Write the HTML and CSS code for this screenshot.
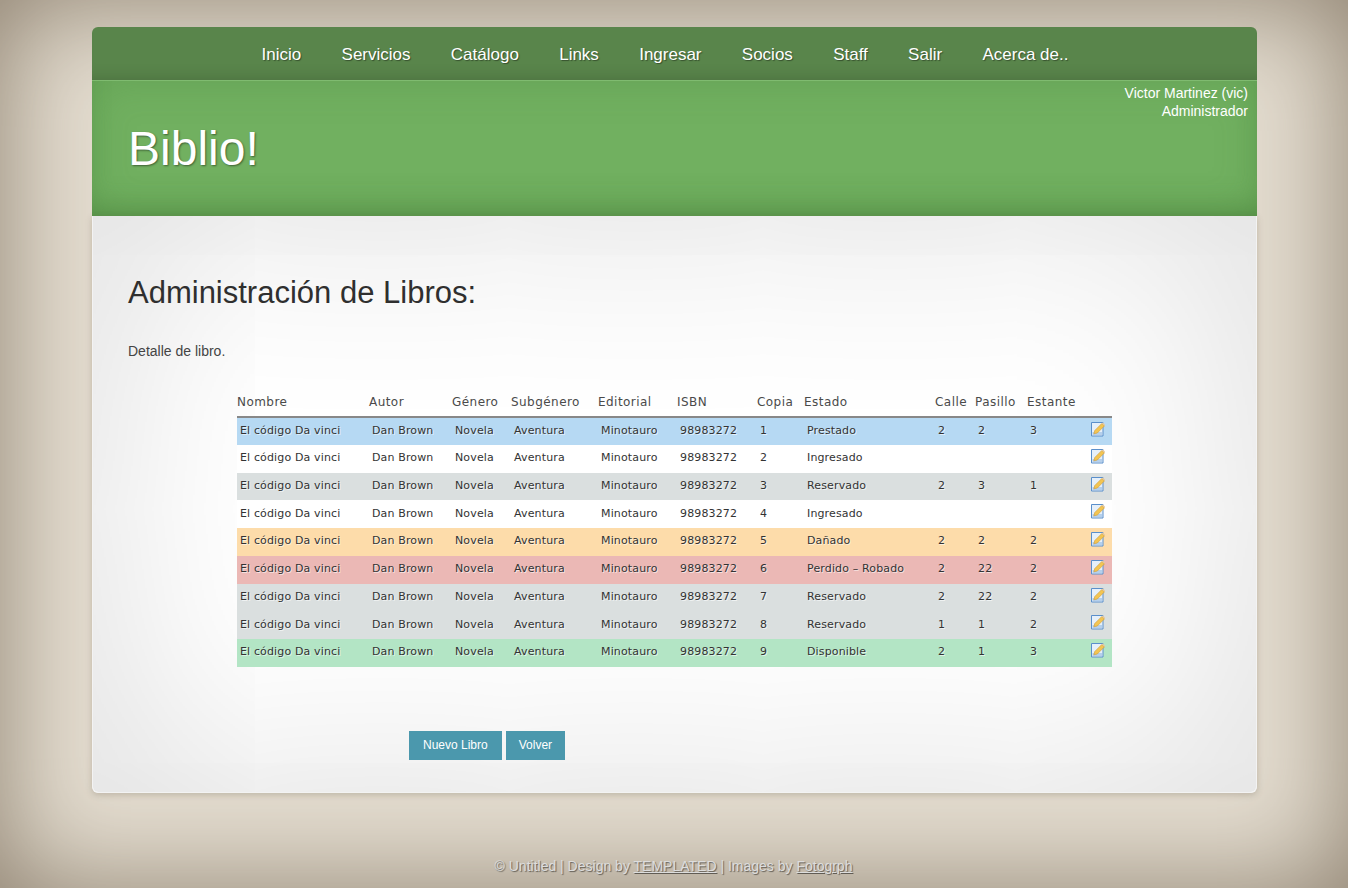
FILE: index.html
```html
<!doctype html>
<html lang="es">
<head>
    <meta charset="UTF-8">
    <title>Biblio!</title>
    <link rel="stylesheet" href="styles.css">
</head>
<body>
<svg class="defs" width="0" height="0">
    <symbol id="edit" viewBox="0 0 14 16">
        <path d="M.5 1.500h11.500v13.500H.5z" fill="#e6f0fa" stroke="#5a8fcb"/>
        <path d="M1.500 11h9.500v3H1.500z" fill="#b5d0ec"/>
        <path d="M2.800 12.800 3.800 9.500 10.800 2.500 13.500 4.800 6.300 12z" fill="#f3c552" stroke="#cf9a35" stroke-width=".6"/>
        <path d="M10.800 2.500 11.800 1.500 14 3.500 13.500 4.800z" fill="#e9c9a0"/>
    </symbol>
</svg>
<div class="page">
    <div class="top">
        <ul class="nav">
            <li>Inicio</li>
            <li>Servicios</li>
            <li>Catálogo</li>
            <li>Links</li>
            <li>Ingresar</li>
            <li>Socios</li>
            <li>Staff</li>
            <li>Salir</li>
            <li>Acerca de..</li>
        </ul>
        <div class="banner">
            <h1>Biblio!</h1>
            <p class="user">Victor Martinez (vic)<br>Administrador</p>
        </div>
    </div>
    <div class="main">
        <h2>Administración de Libros:</h2>
        <p class="intro">Detalle de libro.</p>
        <table class="books">
            <colgroup>
                <col class="c1"><col class="c2"><col class="c3"><col class="c4"><col class="c5"><col class="c6">
                <col class="c7"><col class="c8"><col class="c9"><col class="c10"><col class="c11"><col class="c12">
            </colgroup>
            <thead>
                <tr>
                    <th>Nombre</th><th>Autor</th><th>Género</th><th>Subgénero</th><th>Editorial</th><th>ISBN</th>
                    <th>Copia</th><th>Estado</th><th>Calle</th><th>Pasillo</th><th>Estante</th><th></th>
                </tr>
            </thead>
            <tbody id="rows"></tbody>
        </table>
        <div class="actions">
            <a class="btn">Nuevo Libro</a>
            <a class="btn btn2">Volver</a>
        </div>
    </div>
    <p class="footer">© Untitled | Design by <u>TEMPLATED</u> | Images by <u>Fotogrph</u></p>
</div>
<script>
    var data = [
        ["1", "Prestado", "2", "2", "3", "prestado"],
        ["2", "Ingresado", "", "", "", "ingresado"],
        ["3", "Reservado", "2", "3", "1", "reservado"],
        ["4", "Ingresado", "", "", "", "ingresado"],
        ["5", "Dañado", "2", "2", "2", "danado"],
        ["6", "Perdido – Robado", "2", "22", "2", "perdido"],
        ["7", "Reservado", "2", "22", "2", "reservado"],
        ["8", "Reservado", "1", "1", "2", "reservado"],
        ["9", "Disponible", "2", "1", "3", "disponible"]
    ];
    var str = "";
    for (var i = 0; i < data.length; i++) {
        var d = data[i];
        str += '<tr class="' + d[5] + '">';
        str += "<td>El código Da vinci</td><td>Dan Brown</td><td>Novela</td><td>Aventura</td><td>Minotauro</td><td>98983272</td>";
        for (var j = 0; j < 5; j++) {
            str += "<td>" + d[j] + "</td>";
        }
        str += '<td class="tool"><svg class="edit" width="14" height="16"><use href="#edit"></use></svg></td>';
        str += "</tr>";
    }
    document.getElementById("rows").innerHTML = str;
</script>
</body>
</html>
```

FILE: styles.css
```css
* {
    margin: 0;
    padding: 0;
    list-style: none;
    box-sizing: border-box;
}

html, body {
    height: 100%;
    overflow: hidden;
}

body {
    font-family: "Liberation Sans", Arial, sans-serif;
    background: #e4ddd0;
    box-shadow: inset 0 0 110px #8c7f6d;
}

.defs {
    display: block;
    height: 0;
}

.page {
    width: 1165px;
    margin-left: 92px;
    padding-top: 27px;
}

.top {
    border-radius: 6px 6px 0 0;
    overflow: hidden;
}

.nav {
    display: flex;
    justify-content: center;
    gap: 40.300px;
    height: 54px;
    padding: 17px 19px 0 0;
    background: #59854b;
    border-bottom: 1px solid #7fbb70;
    box-shadow: inset 0 -14px 14px -12px rgba(40, 60, 30, .25);
    color: #fff;
    font-size: 17px;
    line-height: 22px;
    text-shadow: 1px 1px 1px rgba(0, 0, 0, .4);
}

.banner {
    display: flex;
    justify-content: space-between;
    height: 135px;
    padding: 3px 9px 0 36px;
    background: #71b060;
    box-shadow: inset 0 -20px 30px -16px rgba(70, 125, 55, .6), inset 0 0 40px rgba(70, 130, 60, .3);
    color: #fff;
}

.banner h1 {
    font-size: 48px;
    font-weight: normal;
    line-height: 58px;
    margin-top: 36px;
    text-shadow: 1px 1px 2px rgba(0, 0, 0, .45);
}

.user {
    font-size: 14px;
    line-height: 18px;
    text-align: right;
}

.main {
    height: 577px;
    padding: 58px 35px 0;
    background: #fff;
    border: 1px solid #f3f3f3;
    border-top: 0;
    border-radius: 0 0 6px 6px;
    color: #333;
    box-shadow: inset 0 0 200px rgba(0, 0, 0, .17), 0 2px 6px rgba(90, 80, 60, .25);
}

.main h2 {
    font-size: 31px;
    font-weight: normal;
    line-height: 38px;
    color: #2f2f2f;
}

.intro {
    font-size: 14px;
    line-height: 18px;
    margin-top: 30px;
    color: #444;
}

.books {
    width: 875px;
    margin: 27px 0 0 109px;
    border-collapse: collapse;
    table-layout: fixed;
    font-family: "DejaVu Sans", Verdana, sans-serif;
    font-size: 11px;
    letter-spacing: .14px;
    color: #333;
}

.c1 { width: 132px; }
.c2 { width: 83px; }
.c3 { width: 59px; }
.c4 { width: 87px; }
.c5 { width: 79px; }
.c6 { width: 80px; }
.c7 { width: 47px; }
.c8 { width: 131px; }
.c9 { width: 40px; }
.c10 { width: 52px; }
.c11 { width: 61px; }
.c12 { width: 24px; }

.books th {
    height: 30px;
    font-size: 12px;
    font-weight: normal;
    letter-spacing: .45px;
    text-align: left;
    border-bottom: 2px solid #888;
    color: #4a4a4a;
}

.books td {
    height: 27.75px;
    padding: 0 0 2px 3px;
    white-space: nowrap;
    text-shadow: 1px 1px 0 rgba(255, 255, 255, .6);
}

.books td.tool {
    padding: 3px 0 0 3px;
    vertical-align: top;
}

.edit {
    display: block;
}

.prestado { background: #b6d9f3; }
.ingresado { background: #fff; }
.reservado { background: #dadfdf; }
.danado { background: #fddcaa; }
.perdido { background: #ebb8b5; }
.disponible { background: #b3e5c5; }

.actions {
    display: flex;
    gap: 4px;
    margin: 64px 0 0 281px;
}

.btn {
    height: 29px;
    padding: 0 14px;
    background: #4b98ad;
    color: #fff;
    font-size: 12px;
    line-height: 28px;
}

.btn2 {
    padding: 0 13px;
}

.footer {
    margin-top: 64px;
    padding-right: 2px;
    font-size: 14px;
    line-height: 18px;
    text-align: center;
    color: #ddd;
    text-shadow: 1px 1px 1px rgba(0, 0, 0, .5);
}
```
